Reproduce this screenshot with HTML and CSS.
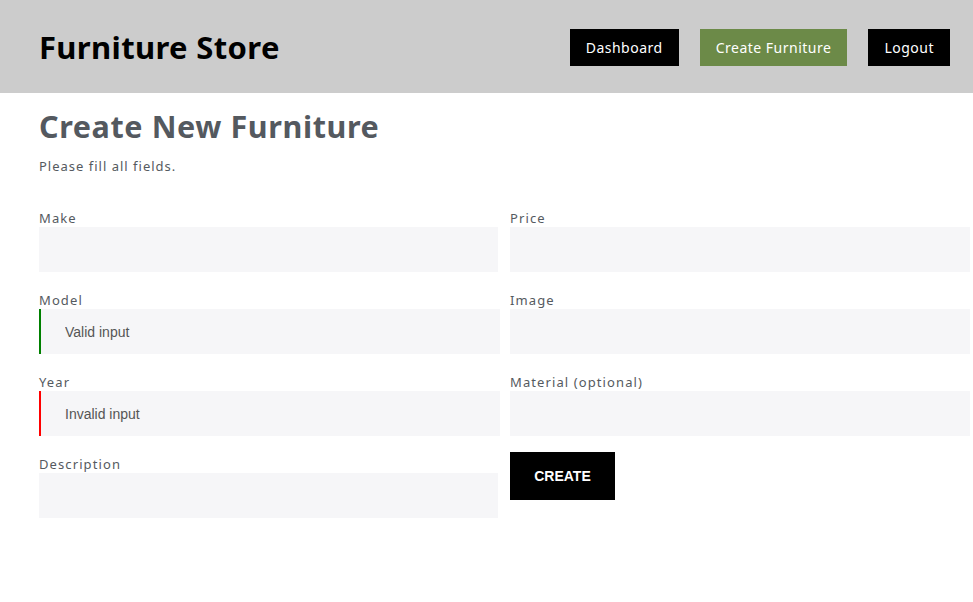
FILE: index.html
```html
<!DOCTYPE html>
<html lang="en">
<head>
<meta charset="utf-8">
<title>Furniture Store</title>
<link rel="stylesheet" href="styles.css">
</head>
<body>
<header class="topbar">
  <h1 class="brand">Furniture Store</h1>
  <nav class="nav">
    <a class="nav-btn" href="#">Dashboard</a>
    <a class="nav-btn nav-btn-active" href="#">Create Furniture</a>
    <a class="nav-btn" href="#">Logout</a>
  </nav>
</header>
<main class="content">
  <h2 class="page-title">Create New Furniture</h2>
  <p class="hint">Please fill all fields.</p>
  <form class="form">
    <div class="col">
      <div class="field">
        <label class="label">Make</label>
        <input class="input" type="text">
      </div>
      <div class="field">
        <label class="label">Model</label>
        <input class="input input-valid" type="text" value="Valid input">
      </div>
      <div class="field">
        <label class="label">Year</label>
        <input class="input input-invalid" type="text" value="Invalid input">
      </div>
      <div class="field">
        <label class="label">Description</label>
        <input class="input" type="text">
      </div>
    </div>
    <div class="col col-right">
      <div class="field">
        <label class="label">Price</label>
        <input class="input" type="text">
      </div>
      <div class="field">
        <label class="label">Image</label>
        <input class="input" type="text">
      </div>
      <div class="field">
        <label class="label">Material (optional)</label>
        <input class="input" type="text">
      </div>
      <div class="field">
        <button class="submit" type="button">CREATE</button>
      </div>
    </div>
  </form>
</main>
</body>
</html>
```

FILE: styles.css
```css
* { box-sizing: border-box; }
body {
  margin: 0;
  font-family: "Noto Sans", "Open Sans", sans-serif;
  background: #fff;
}
.topbar {
  height: 93px;
  background: #cccccc;
  display: flex;
  align-items: center;
  justify-content: space-between;
  padding: 0 23px 0 39px;
}
.brand {
  margin: 0;
  font-size: 31px;
  font-weight: 700;
  color: #000;
  letter-spacing: 0.35px;
}
.nav {
  display: flex;
  gap: 21px;
  margin-top: 2px;
}
.nav-btn {
  display: block;
  height: 37px;
  line-height: 37px;
  padding: 0 16px;
  background: #000;
  color: #fff;
  text-decoration: none;
  font-size: 14px;
  letter-spacing: 0.5px;
}
.nav-btn-active {
  background: #6c8a48;
}
.content {
  padding: 12px 0 0 39px;
}
.page-title {
  margin: 0;
  font-size: 30.5px;
  font-weight: 700;
  color: #54595f;
  letter-spacing: 0.6px;
  line-height: 42px;
}
.hint {
  margin: 10px 0 0;
  font-size: 13px;
  color: #555a60;
  letter-spacing: 1px;
}
.form {
  display: flex;
  gap: 12px;
  margin-top: 34px;
}
.col {
  width: 459px;
  display: flex;
  flex-direction: column;
  gap: 19px;
}
.col-right {
  width: 460px;
}
.field {
  display: flex;
  flex-direction: column;
}
.label {
  font-size: 13px;
  color: #555a60;
  letter-spacing: 1.1px;
  line-height: 18px;
}
.input {
  height: 45px;
  border: none;
  background: #f6f6f8;
  font-family: "Liberation Sans", Arial, sans-serif;
  font-size: 14px;
  color: #555;
  padding: 0 0 0 26px;
  outline: none;
  width: 100%;
}
.input-valid {
  border-left: 2px solid #008000;
  width: 461px;
  padding-left: 24px;
}
.input-invalid {
  border-left: 2px solid #ff0000;
  width: 461px;
  padding-left: 24px;
}
.submit {
  width: 105px;
  height: 48px;
  background: #000;
  color: #fff;
  border: none;
  font-family: "Liberation Sans", Arial, sans-serif;
  font-weight: 700;
  font-size: 14px;
  margin-top: -3px;
}
```
